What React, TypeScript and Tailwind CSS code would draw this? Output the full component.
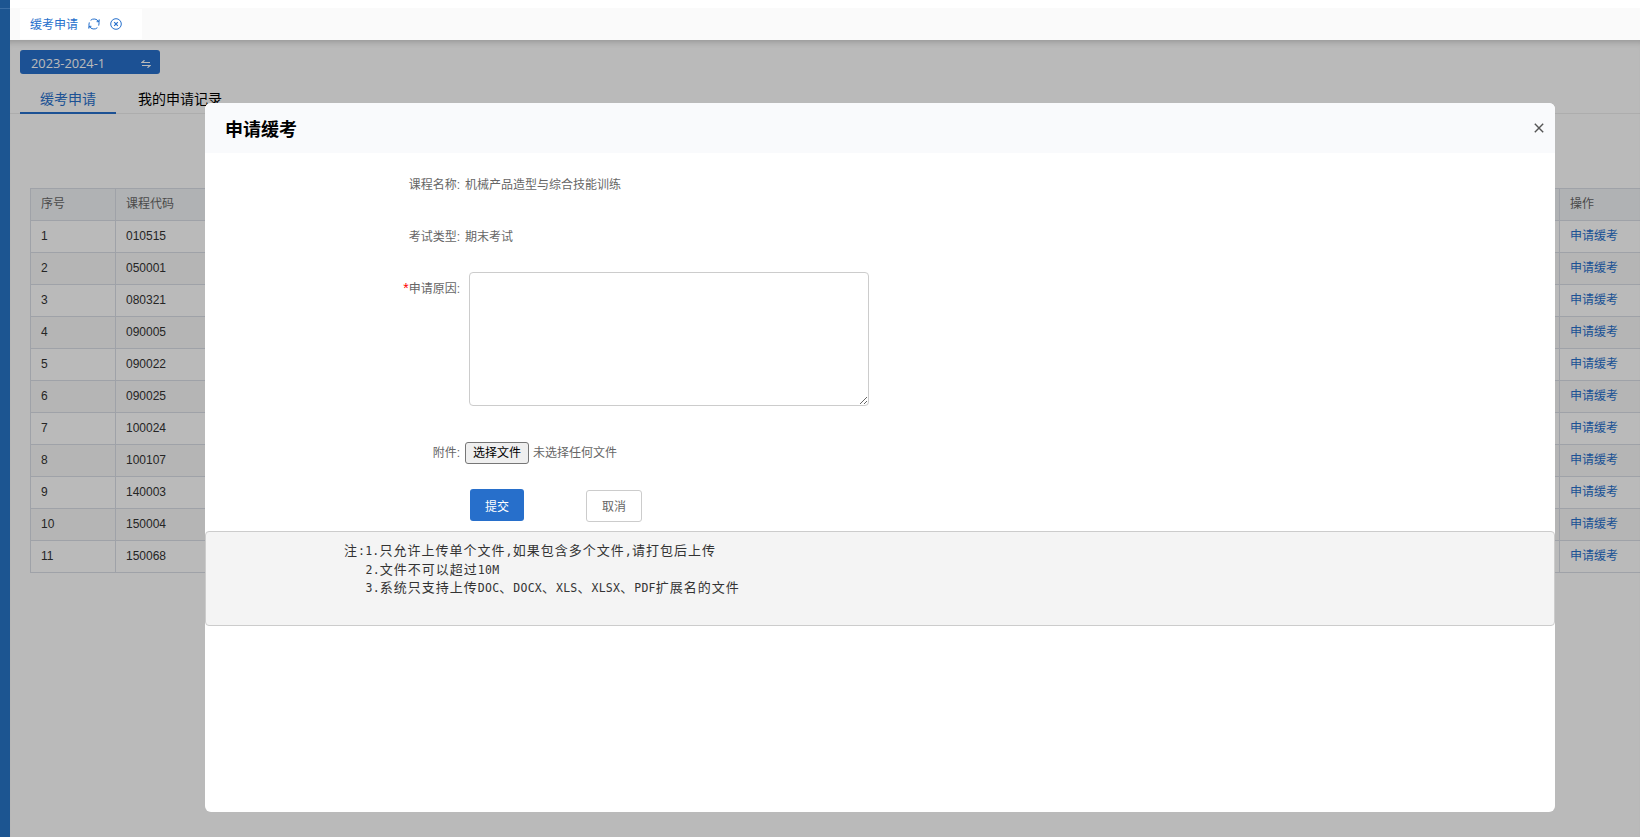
import React, { useState } from "react";

const COURSES = [
  "010515",
  "050001",
  "080321",
  "090005",
  "090022",
  "090025",
  "100024",
  "100107",
  "140003",
  "150004",
  "150068",
];

const NOTES = [
  "注:1.只允许上传单个文件,如果包含多个文件,请打包后上传",
  "2.文件不可以超过10M",
  "3.系统只支持上传DOC、DOCX、XLS、XLSX、PDF扩展名的文件",
];

function RefreshIcon() {
  return (
    <svg width="12" height="12" viewBox="0 0 12 12" fill="none" stroke="currentColor" strokeWidth="1" aria-hidden="true">
      <path d="M2.2 9.8A5 5 0 0 1 1.3 4.4M2.6 2.3A5.2 5.2 0 0 1 10.6 3.6" />
      <path d="M9.8 2.2A5 5 0 0 1 10.7 7.6M9.4 9.7A5.2 5.2 0 0 1 1.4 8.4" />
      <path d="M8.6 3.7h2.6V1.4M3.4 8.3H.8v2.3" />
    </svg>
  );
}

function CloseCircleIcon() {
  return (
    <svg width="12" height="12" viewBox="0 0 12 12" fill="none" stroke="currentColor" strokeWidth="1" aria-hidden="true">
      <circle cx="6" cy="6" r="5.3" />
      <path d="M4.2 4.2l3.6 3.6M7.8 4.2L4.2 7.8" strokeWidth="1.2" />
    </svg>
  );
}

function SwapIcon() {
  return (
    <svg className="mt-[3px]" width="10" height="8" viewBox="0 0 10 8" fill="none" stroke="currentColor" strokeWidth="1.2" aria-hidden="true">
      <path d="M3.5 .3L.8 2.5H9M1 5.5h8.2L6.5 7.7" />
    </svg>
  );
}

// Latin runs are narrower than the CJK ones, so each gets its own face
function NoteLine({ text }: { text: string }) {
  return (
    <>
      {text.split(/([\x21-\x7e]+)/).map((part, i) => (
        <span
          key={i}
          className={
            i % 2
              ? "font-['DejaVu_Sans_Mono',monospace] text-[11.5px] tracking-[0.24px]"
              : "font-['Noto_Sans_CJK_SC',sans-serif] text-[13px] tracking-[1px]"
          }
        >
          {part}
        </span>
      ))}
    </>
  );
}

function FormRow({ label, required, className, children }: { label: string; required?: boolean; className: string; children: React.ReactNode }) {
  return (
    <div className={`flex ${className}`}>
      <div className="w-[255px] shrink-0 text-right leading-5">
        {required && <span className="text-sm leading-none text-[#ff0000]">*</span>}
        {label}:
      </div>
      {children}
    </div>
  );
}

export default function App() {
  const [reason, setReason] = useState("");

  return (
    <div className="flex h-[837px] w-[1640px] overflow-hidden bg-white font-['Liberation_Sans','Noto_Sans_CJK_SC',sans-serif] text-xs text-[#666]">
      {/* Sidebar edge */}
      <div className="w-2.5 shrink-0 bg-[#1c5591] pt-2">
        <div className="h-px bg-[#3b6ea5]" />
      </div>

      <div className="flex min-w-0 flex-1 flex-col pt-2">
        {/* Page tabs */}
        <div className="flex h-8 shrink-0 bg-[#fafafa] px-2.5 py-px">
          <div className="flex w-[122px] items-center bg-white pl-2.5 text-[#2670cc]">
            <span className="pt-px">缓考申请</span>
            <span className="ml-2.5"><RefreshIcon /></span>
            <span className="ml-2.5"><CloseCircleIcon /></span>
          </div>
        </div>

        <main className="relative min-h-0 flex-1 pt-2.5">
          <div className="ml-2.5 flex h-6 w-[140px] items-center justify-between rounded-[3px] bg-[#276fcb] pl-[11px] pr-[9px] text-white">
            <span className="pt-[3px] font-['Open_Sans',sans-serif] text-[12.8px]">2023-2024-1</span>
            <SwapIcon />
          </div>

          <div className="flex h-10 border-b border-[#eee] pl-2.5 text-sm leading-[50px]">
            <div className="h-10 border-b-2 border-[#276fcb] px-5 text-[#276fcb]">缓考申请</div>
            <div className="px-[22px] text-black">我的申请记录</div>
          </div>

          <table className="ml-5 mt-[74px] w-[1660px] table-fixed border-collapse text-left">
            <colgroup>
              <col className="w-[85px]" />
              <col className="w-[180px]" />
              <col />
              <col className="w-[130px]" />
            </colgroup>
            <thead>
              <tr className="h-8 bg-[#f2f5f7]">
                {["序号", "课程代码", "", "操作"].map((title, i) => (
                  <th key={i} className="border border-[#dbdfe6] px-2.5 pb-0.5 font-normal">{title}</th>
                ))}
              </tr>
            </thead>
            <tbody>
              {COURSES.map((code, i) => (
                <tr key={code} className="h-8 text-[#333] even:bg-[#f9f9f9]">
                  <td className="border border-[#dbdfe6] px-2.5 pb-0.5">{i + 1}</td>
                  <td className="border border-[#dbdfe6] px-2.5 pb-0.5">{code}</td>
                  <td className="border border-[#dbdfe6]" />
                  <td className="border border-[#dbdfe6] px-2.5 pb-0.5 text-[#276fcb]">申请缓考</td>
                </tr>
              ))}
            </tbody>
          </table>

          {/* Backdrop and dialog */}
          <div className="absolute inset-0 bg-black/27 shadow-[inset_0_7px_6px_-5px_rgba(0,0,0,0.2)]" />
          <div role="dialog" className="absolute left-[195px] top-[63px] h-[709px] w-[1350px] rounded-md bg-white">
            <div className="flex h-[50px] items-center justify-between rounded-t-md bg-[#f9fafc] pl-5 pr-[11px]">
              <h2 className="mt-1 text-lg font-bold text-black">申请缓考</h2>
              <svg width="10" height="10" viewBox="0 0 10 10" stroke="#555" strokeWidth="1.4" aria-label="关闭">
                <path d="M.8 .8l8.4 8.4M9.2 .8L.8 9.2" />
              </svg>
            </div>

            <FormRow label="课程名称" className="pt-[22px]">
              <div className="ml-[5px] leading-5">机械产品造型与综合技能训练</div>
            </FormRow>
            <FormRow label="考试类型" className="pt-8">
              <div className="ml-[5px] leading-5">期末考试</div>
            </FormRow>
            <FormRow label="申请原因" required className="h-[166px] pt-8">
              <textarea
                value={reason}
                onChange={(e) => setReason(e.target.value)}
                aria-label="申请原因"
                className="-mt-[7px] ml-[9px] h-[134px] w-[400px] resize rounded border border-[#ccc] p-2 outline-none"
              />
            </FormRow>
            <FormRow label="附件" className="items-center pt-[29px]">
              <button className="ml-[5px] h-[22px] w-16 rounded-[3px] border border-[#767676] bg-[#efefef] text-black">选择文件</button>
              <span className="ml-1">未选择任何文件</span>
            </FormRow>

            <div className="flex pl-[265px] pt-[25px]">
              <button className="h-8 w-[54px] rounded-[3px] bg-[#276fcb] pt-[3px] text-white">提交</button>
              <button className="ml-[62px] mt-px h-8 w-14 rounded-[3px] border border-[#ccc] pt-0.5">取消</button>
            </div>

            <div className="mt-[9px] h-[95px] rounded border border-[#ccc] bg-[#f4f4f4] pt-[9px] text-[#333]">
              {NOTES.map((note, i) => (
                <div key={note} className={`h-[18.57px] whitespace-nowrap leading-[18.57px] ${i ? "pl-[159.5px]" : "pl-[138px]"}`}>
                  <NoteLine text={note} />
                </div>
              ))}
            </div>
          </div>
        </main>
      </div>
    </div>
  );
}
